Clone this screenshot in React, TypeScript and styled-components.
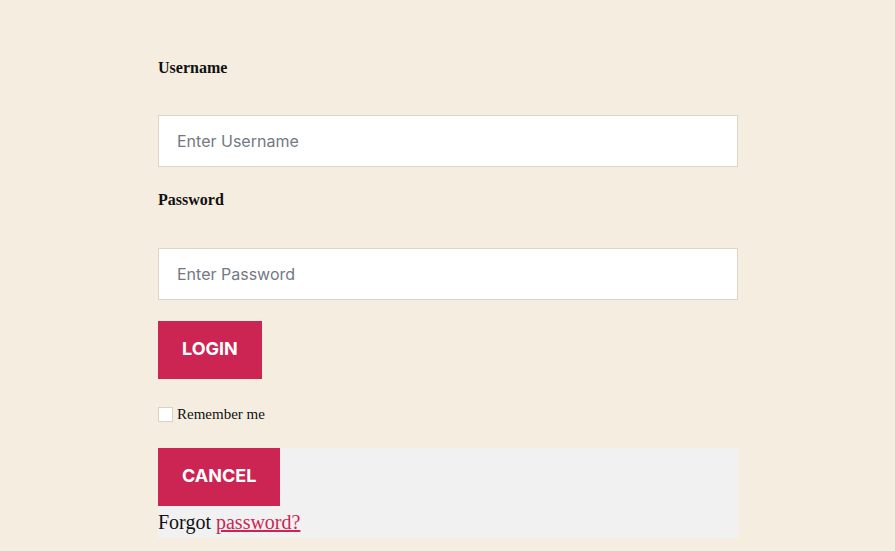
import React from "react";
import styled, { createGlobalStyle } from "styled-components";

const Global = createGlobalStyle`
  html, body { margin: 0; padding: 0; }
  body {
    background: #f5eee0;
    font-family: "Liberation Serif", "Times New Roman", serif;
    color: #111;
  }
`;

const Form = styled.form`
  display: flex;
  flex-direction: column;
  width: 580px;
  margin-left: 158px;
  padding-top: 57px;
`;

const Label = styled.label<{ $gap: number }>`
  display: block;
  font-size: 16px;
  font-weight: bold;
  line-height: 21px;
  height: 20px;
  margin-bottom: ${(p) => p.$gap}px;
`;

const Input = styled.input<{ $after: number }>`
  box-sizing: border-box;
  width: 100%;
  height: 52px;
  padding: 0 18px;
  border: 1px solid #dcd5c8;
  background: #fff;
  font-family: Inter, "Noto Sans", sans-serif;
  font-size: 16px;
  color: #333;
  outline: none;
  margin: 0 0 ${(p) => p.$after}px 0;
  &::placeholder {
    color: #737982;
  }
`;

const Button = styled.button`
  align-self: flex-start;
  box-sizing: border-box;
  height: 58px;
  padding: 0 24px 3px;
  border: none;
  background: #cd2553;
  color: #fff;
  font-family: Inter, "Noto Sans", sans-serif;
  font-weight: 700;
  font-size: 18px;
  text-transform: uppercase;
  cursor: pointer;
`;

const LoginButton = styled(Button)`
  margin-bottom: 27px;
`;

const RememberRow = styled.label`
  display: flex;
  align-items: center;
  height: 15px;
  font-size: 15px;
  padding-top: 1px;
  margin-bottom: 26px;
`;

const Check = styled.input`
  appearance: none;
  box-sizing: border-box;
  width: 15px;
  height: 15px;
  margin: 0 4px 0 0;
  background: #fff;
  border: 1px solid #d9d3c6;
`;

const Footer = styled.div`
  display: flex;
  flex-direction: column;
  background: #f1f1f1;
`;

const Forgot = styled.span`
  font-size: 20px;
  line-height: 32px;
  height: 32px;
`;

const Link = styled.a`
  color: #cd2553;
  text-decoration: underline;
`;

export default function App() {
  return (
    <>
      <Global />
      <Form onSubmit={(e) => e.preventDefault()}>
        <Label $gap={38}>Username</Label>
        <Input $after={22} type="text" placeholder="Enter Username" />
        <Label $gap={39}>Password</Label>
        <Input $after={21} type="password" placeholder="Enter Password" />
        <LoginButton type="submit">Login</LoginButton>
        <RememberRow>
          <Check type="checkbox" />
          Remember me
        </RememberRow>
        <Footer>
          <Button type="button">Cancel</Button>
          <Forgot>
            Forgot <Link href="#">password?</Link>
          </Forgot>
        </Footer>
      </Form>
    </>
  );
}
